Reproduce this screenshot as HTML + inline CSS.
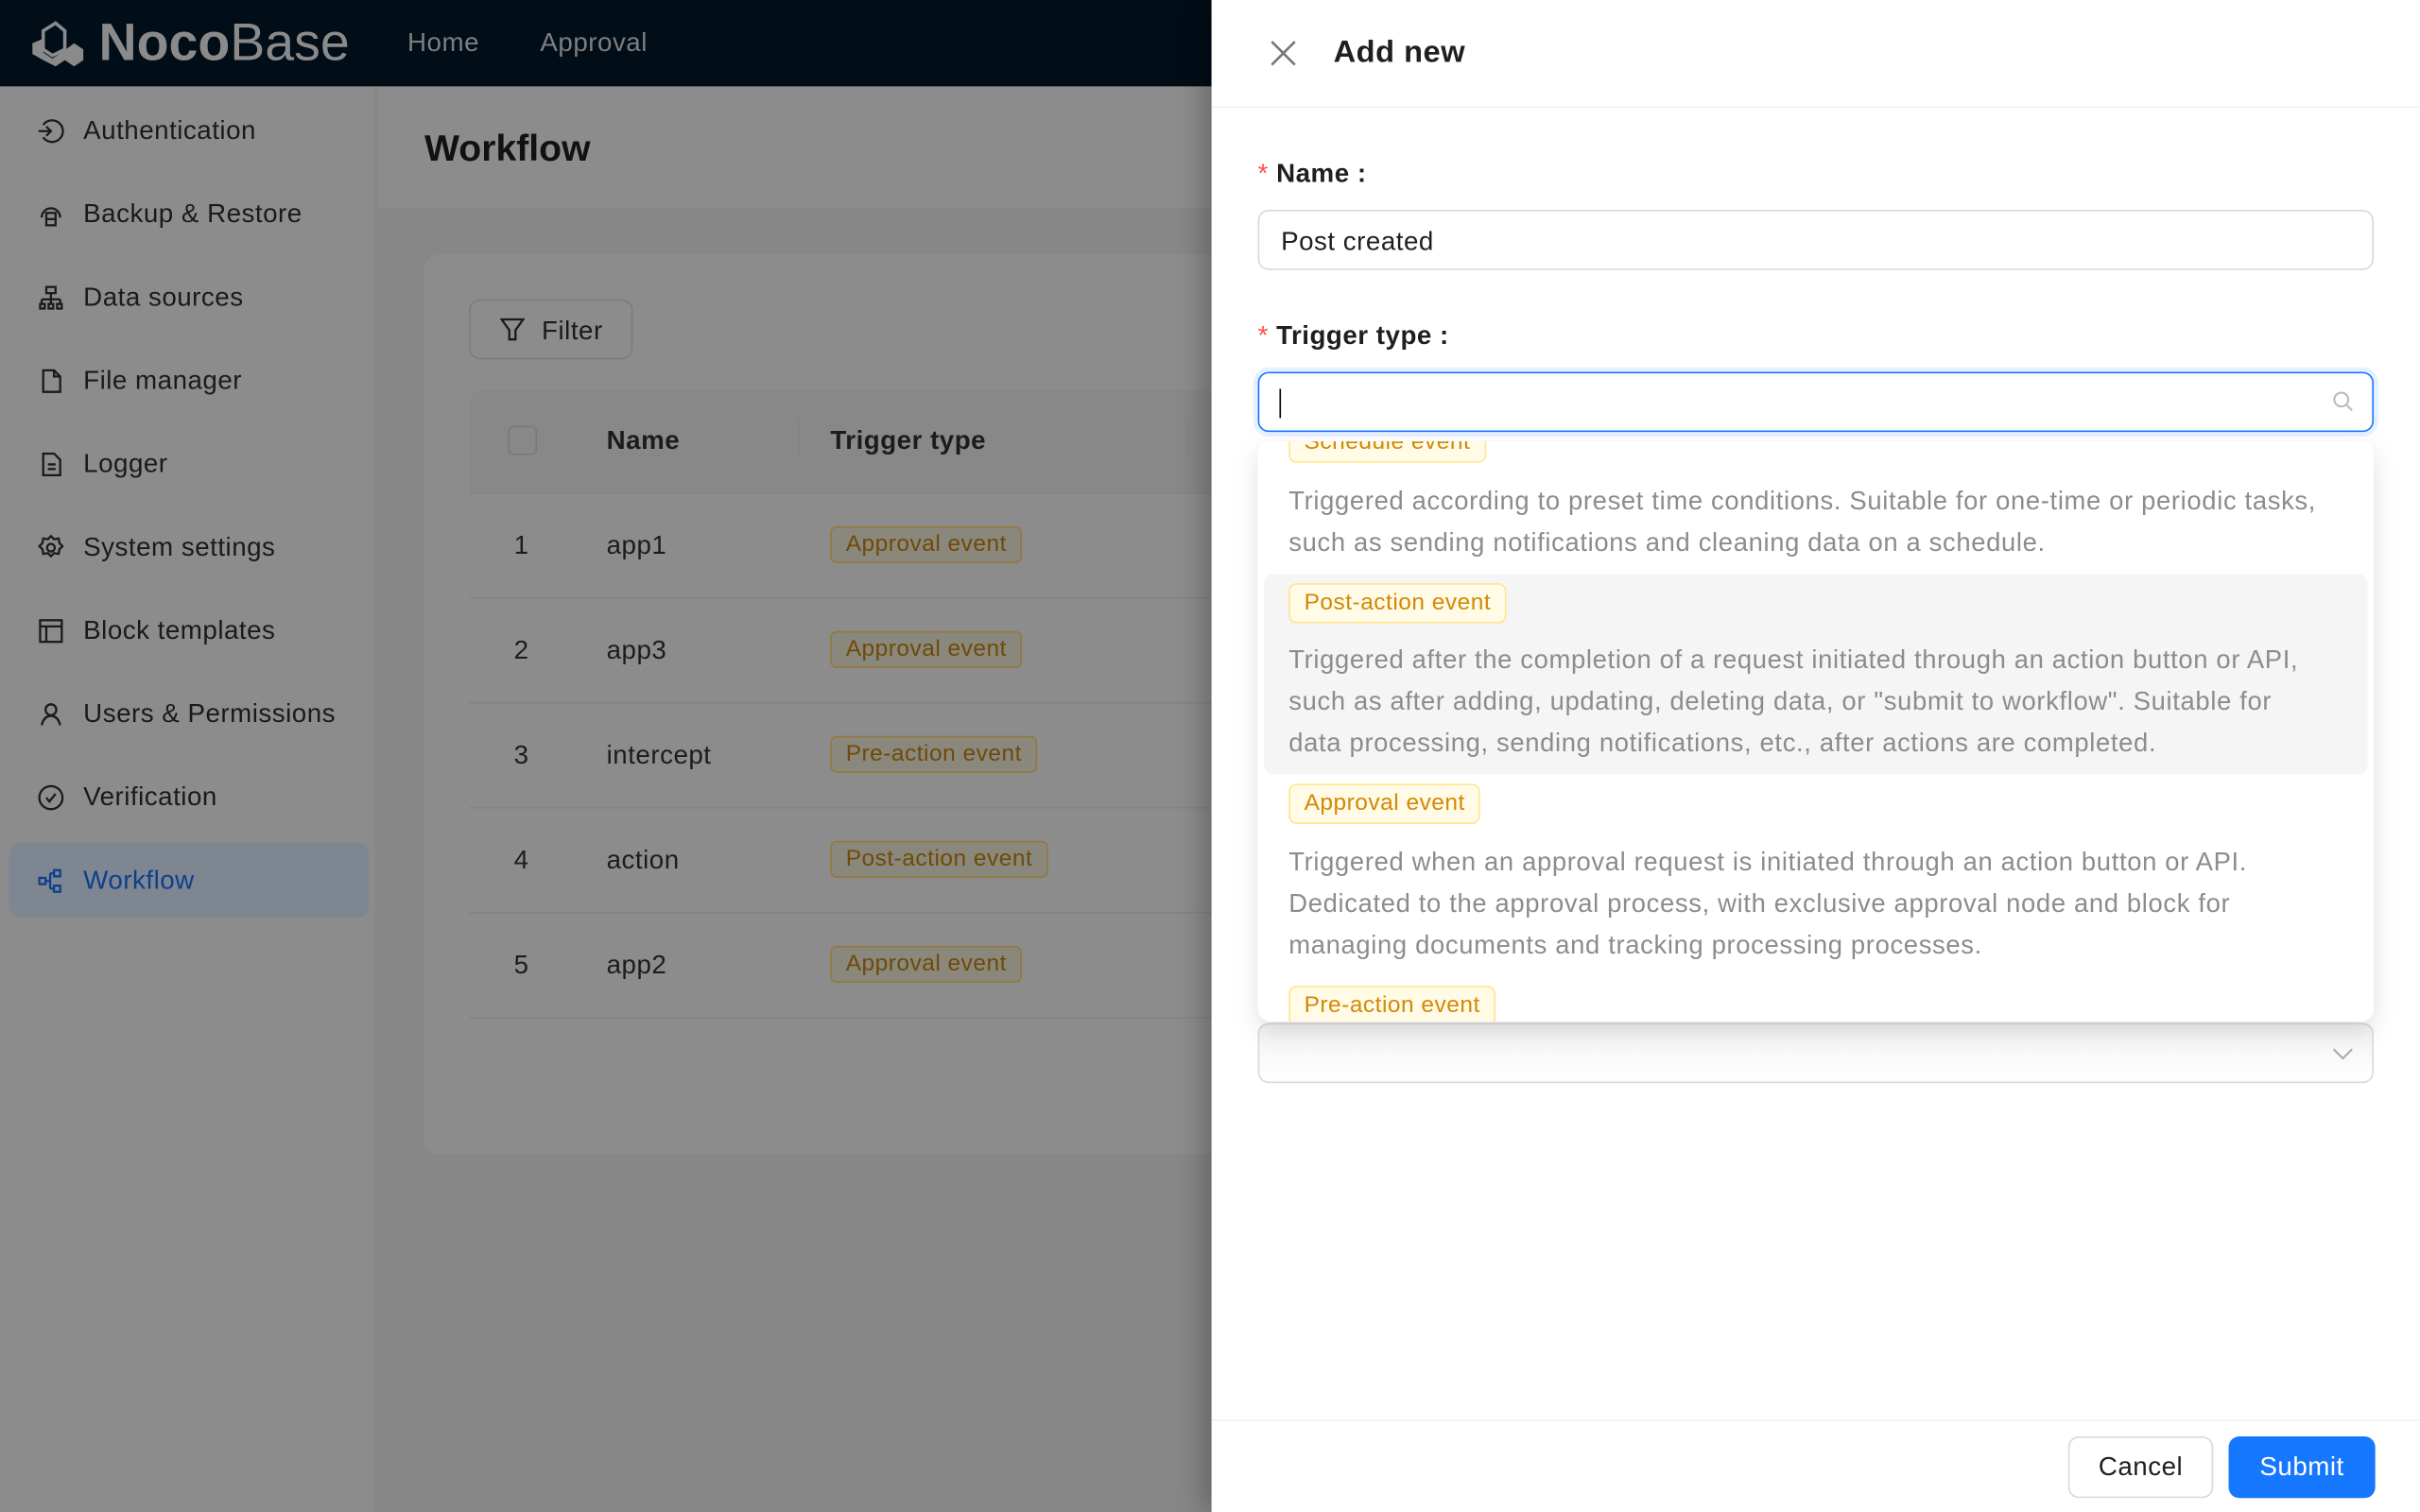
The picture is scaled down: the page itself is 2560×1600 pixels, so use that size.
<!DOCTYPE html>
<html><head><meta charset="utf-8"><style>
*{box-sizing:border-box;margin:0;padding:0}
html,body{width:2560px;height:1600px;overflow:hidden;background:#878787}
#w{position:absolute;left:0;top:0;width:1568px;height:980px;transform:scale(1.632653);transform-origin:0 0;font-family:"Liberation Sans",sans-serif;color:#1c1c1c;letter-spacing:0.3px}
.a{position:absolute}
.hdr{left:0;top:0;width:785px;height:56px;background:#010d17}
.side{left:0;top:56px;width:244px;height:924px;background:#8c8c8c;border-right:1px solid #858585}
.mi{position:absolute;left:24px;font-size:17px;color:#1a1a1a;display:flex;align-items:center;gap:12px}
.mi svg{width:18px;height:18px}
.tag{position:absolute;height:24px;padding:0 9px;border:1px solid #93793b;background:#8a887c;border-radius:4px;color:#6f4a08;font-size:15px;line-height:22px}
.row{position:absolute;left:304px;width:481px;height:68px;border-bottom:1px solid #838383;font-size:17px}
.row span{position:absolute;top:24px}
.drw{left:785px;top:0;width:783px;height:980px;background:#fff;box-shadow:-6px 0 16px rgba(0,0,0,.25)}
.lbl{position:absolute;left:30px;font-size:17px;font-weight:bold;color:#1f1f1f}
.lbl b{color:#ff4d4f;font-weight:normal;margin-right:5px}
.inp{position:absolute;left:30px;width:723px;height:39px;border:1px solid #d9d9d9;border-radius:7px}
.ytag{position:absolute;left:50px;height:26px;padding:0 9px;border:1px solid #ffe58f;background:#fffbe6;border-radius:5px;color:#d48806;font-size:15px;line-height:24px}
.desc{position:absolute;left:50px;white-space:nowrap;font-size:16.8px;line-height:27px;color:#8c8c8c;letter-spacing:0.4px}
</style></head><body><div id="w">
<div class="a hdr">
 <svg class="a" style="left:18px;top:12px" width="38" height="32" viewBox="0 0 38 32"><path d="M10 8 L18 3 L24 8 L24 20 L16 24 L10 20Z" fill="none" stroke="#8a8a8a" stroke-width="2.2"/><path d="M3 16 L10 13 L10 22 L16 26 L22 22 L30 16 L36 20 L36 27 L30 31 L24 27 L18 31 L10 27 L3 23Z" fill="#8a8a8a"/></svg>
 <div class="a" style="left:64px;top:9px;font-size:34px;color:#8a8a8a;letter-spacing:0"><b>Noco</b><span style="font-weight:300">Base</span></div>
 <div class="a" style="left:264px;top:18px;font-size:17px;color:#7e7e7e">Home</div>
 <div class="a" style="left:350px;top:18px;font-size:17px;color:#7e7e7e">Approval</div>
</div>
<div class="a side">
 <div class="mi" style="top:19px"><svg viewBox="0 0 18 18" fill="none" stroke="#1a1a1a" stroke-width="1.4"><path d="M4 5a7 7 0 1 1 0 8M1 9h8M6 6l3 3-3 3"/></svg>Authentication</div>
 <div class="mi" style="top:73px"><svg viewBox="0 0 18 18" fill="none" stroke="#1a1a1a" stroke-width="1.4"><path d="M3 11a6 6 0 0 1 12 0"/><rect x="6" y="8" width="6" height="8"/><path d="M6 12h6"/></svg>Backup &amp; Restore</div>
 <div class="mi" style="top:127px"><svg viewBox="0 0 18 18" fill="none" stroke="#1a1a1a" stroke-width="1.4"><rect x="6" y="2" width="6" height="4"/><path d="M9 6v4M3 10h12M3 10v3M9 10v3M15 10v3"/><rect x="2" y="13" width="3" height="3"/><rect x="7.5" y="13" width="3" height="3"/><rect x="13" y="13" width="3" height="3"/></svg>Data sources</div>
 <div class="mi" style="top:181px"><svg viewBox="0 0 18 18" fill="none" stroke="#1a1a1a" stroke-width="1.4"><path d="M4 2h7l4 4v10H4zM11 2v4h4"/></svg>File manager</div>
 <div class="mi" style="top:235px"><svg viewBox="0 0 18 18" fill="none" stroke="#1a1a1a" stroke-width="1.4"><path d="M4 2h7l4 4v10H4zM7 9h5M7 12h5"/></svg>Logger</div>
 <div class="mi" style="top:289px"><svg viewBox="0 0 18 18" fill="none" stroke="#1a1a1a" stroke-width="1.4"><circle cx="9" cy="9" r="2.5"/><path d="M9 1.5l2 2 3-.5.5 3 2 2-2 2-.5 3-3-.5-2 2-2-2-3 .5-.5-3-2-2 2-2 .5-3 3 .5z"/></svg>System settings</div>
 <div class="mi" style="top:343px"><svg viewBox="0 0 18 18" fill="none" stroke="#1a1a1a" stroke-width="1.4"><rect x="2" y="2" width="14" height="14"/><path d="M2 6h14M6 6v10"/></svg>Block templates</div>
 <div class="mi" style="top:397px"><svg viewBox="0 0 18 18" fill="none" stroke="#1a1a1a" stroke-width="1.4"><circle cx="9" cy="6" r="3.5"/><path d="M3 16c1-4 3-6 6-6s5 2 6 6"/></svg>Users &amp; Permissions</div>
 <div class="mi" style="top:451px"><svg viewBox="0 0 18 18" fill="none" stroke="#1a1a1a" stroke-width="1.4"><circle cx="9" cy="9" r="7.5"/><path d="M6 9l2 2.5 4-5"/></svg>Verification</div>
 <div class="a" style="left:6px;top:490px;width:233px;height:49px;background:#7d8691;border-radius:8px"></div>
 <div class="mi" style="top:505px;color:#0f3f8c"><svg viewBox="0 0 18 18" fill="none" stroke="#0f3f8c" stroke-width="1.4"><rect x="1.5" y="7" width="4" height="4"/><rect x="11" y="2" width="4" height="4"/><rect x="11" y="12" width="4" height="4"/><path d="M5.5 9h3M8.5 4v10M8.5 4h2.5M8.5 14h2.5"/></svg>Workflow</div>
</div>
<div class="a" style="left:245px;top:56px;width:540px;height:79px;background:#8c8c8c"></div>
<div class="a" style="left:275px;top:83px;font-size:24px;font-weight:bold;color:#111;letter-spacing:0">Workflow</div>
<div class="a" style="left:275px;top:165px;width:520px;height:583px;background:#8c8c8c;border-radius:9px"></div>
<div class="a" style="left:304px;top:194px;width:106px;height:39px;border:1px solid #7c7c7c;border-radius:7px;font-size:17px;color:#1a1a1a"><svg class="a" style="left:19px;top:11px" width="16" height="16" viewBox="0 0 16 16" fill="none" stroke="#1a1a1a" stroke-width="1.4"><path d="M1 1h14l-5 7v6H6V8z"/></svg><span class="a" style="left:46px;top:10px">Filter</span></div>
<div class="a" style="left:304px;top:253px;width:481px;height:67px;background:#888888;border-bottom:1px solid #838383;border-radius:8px 0 0 0"></div>
<div class="a" style="left:329px;top:276px;width:19px;height:19px;border:1px solid #7a7a7a;border-radius:4px"></div>
<div class="a" style="left:517px;top:272px;width:1px;height:24px;background:#838383"></div>
<div class="a" style="left:769px;top:272px;width:1px;height:24px;background:#838383"></div>
<div class="a" style="left:393px;top:276px;font-size:17px;font-weight:bold">Name</div>
<div class="a" style="left:538px;top:276px;font-size:17px;font-weight:bold">Trigger type</div>
<div class="row" style="top:320px"><span style="left:29px">1</span><span style="left:89px">app1</span></div><div class="tag" style="left:538px;top:341px">Approval event</div>
<div class="row" style="top:388px"><span style="left:29px">2</span><span style="left:89px">app3</span></div><div class="tag" style="left:538px;top:409px">Approval event</div>
<div class="row" style="top:456px"><span style="left:29px">3</span><span style="left:89px">intercept</span></div><div class="tag" style="left:538px;top:477px">Pre-action event</div>
<div class="row" style="top:524px"><span style="left:29px">4</span><span style="left:89px">action</span></div><div class="tag" style="left:538px;top:545px">Post-action event</div>
<div class="row" style="top:592px"><span style="left:29px">5</span><span style="left:89px">app2</span></div><div class="tag" style="left:538px;top:613px">Approval event</div>

<div class="a drw">
 <div class="a" style="left:0;top:69px;width:783px;height:1px;background:#f0f0f0"></div>
 <svg class="a" style="left:38px;top:26px" width="17" height="17" viewBox="0 0 17 17" stroke="#777" stroke-width="1.6"><path d="M1 1l15 15M16 1L1 16"/></svg>
 <div class="a" style="left:79px;top:23px;font-size:20px;font-weight:bold;color:#1f1f1f">Add new</div>
 <div class="lbl" style="top:103px"><b>*</b>Name :</div>
 <div class="inp" style="top:136px"><span class="a" style="left:14px;top:10px;font-size:17px;color:#1f1f1f">Post created</span></div>
 <div class="lbl" style="top:208px"><b>*</b>Trigger type :</div>
 <div class="inp" style="top:241px;border-color:#1677ff;box-shadow:0 0 0 3px #e6f0ff"><div class="a" style="left:13px;top:10px;width:1px;height:19px;background:#000"></div><svg class="a" style="left:695px;top:11px" width="14" height="14" viewBox="0 0 14 14" fill="none" stroke="#bbb" stroke-width="1.3"><circle cx="6" cy="6" r="4.5"/><path d="M9.5 9.5l3.5 3.5"/></svg></div>
 <div class="inp" style="top:663px;background:linear-gradient(#f2f2f2,#fff)"><svg class="a" style="left:695px;top:13px" width="14" height="12" viewBox="0 0 14 12" fill="none" stroke="#aaa" stroke-width="1.3"><path d="M1 3l6 6 6-6"/></svg></div>
 <div class="a" style="left:30px;top:286px;width:723px;height:376px;background:#fff;border-radius:8px;box-shadow:0 6px 16px rgba(0,0,0,.12);overflow:hidden">
  <div class="ytag" style="left:20px;top:-12px">Schedule event</div>
  <div class="desc" style="left:20px;top:25px">Triggered according to preset time conditions. Suitable for one-time or periodic tasks,<br>such as sending notifications and cleaning data on a schedule.</div>
  <div class="a" style="left:4px;top:86px;width:715px;height:130px;background:#f5f5f5;border-radius:6px"></div>
  <div class="ytag" style="left:20px;top:92px">Post-action event</div>
  <div class="desc" style="left:20px;top:128px">Triggered after the completion of a request initiated through an action button or API,<br>such as after adding, updating, deleting data, or "submit to workflow". Suitable for<br>data processing, sending notifications, etc., after actions are completed.</div>
  <div class="ytag" style="left:20px;top:222px">Approval event</div>
  <div class="desc" style="left:20px;top:259px">Triggered when an approval request is initiated through an action button or API.<br>Dedicated to the approval process, with exclusive approval node and block for<br>managing documents and tracking processing processes.</div>
  <div class="ytag" style="left:20px;top:353px">Pre-action event</div>
 </div>
 <div class="a" style="left:0;top:920px;width:783px;height:1px;background:#f0f0f0"></div>
 <div class="a" style="left:555px;top:931px;width:94px;height:40px;border:1px solid #d9d9d9;border-radius:7px;font-size:17px;text-align:center;line-height:38px;color:#1f1f1f">Cancel</div>
 <div class="a" style="left:659px;top:931px;width:95px;height:40px;background:#1677ff;border-radius:7px;font-size:17px;text-align:center;line-height:40px;color:#fff">Submit</div>
</div>
</div></body></html>
